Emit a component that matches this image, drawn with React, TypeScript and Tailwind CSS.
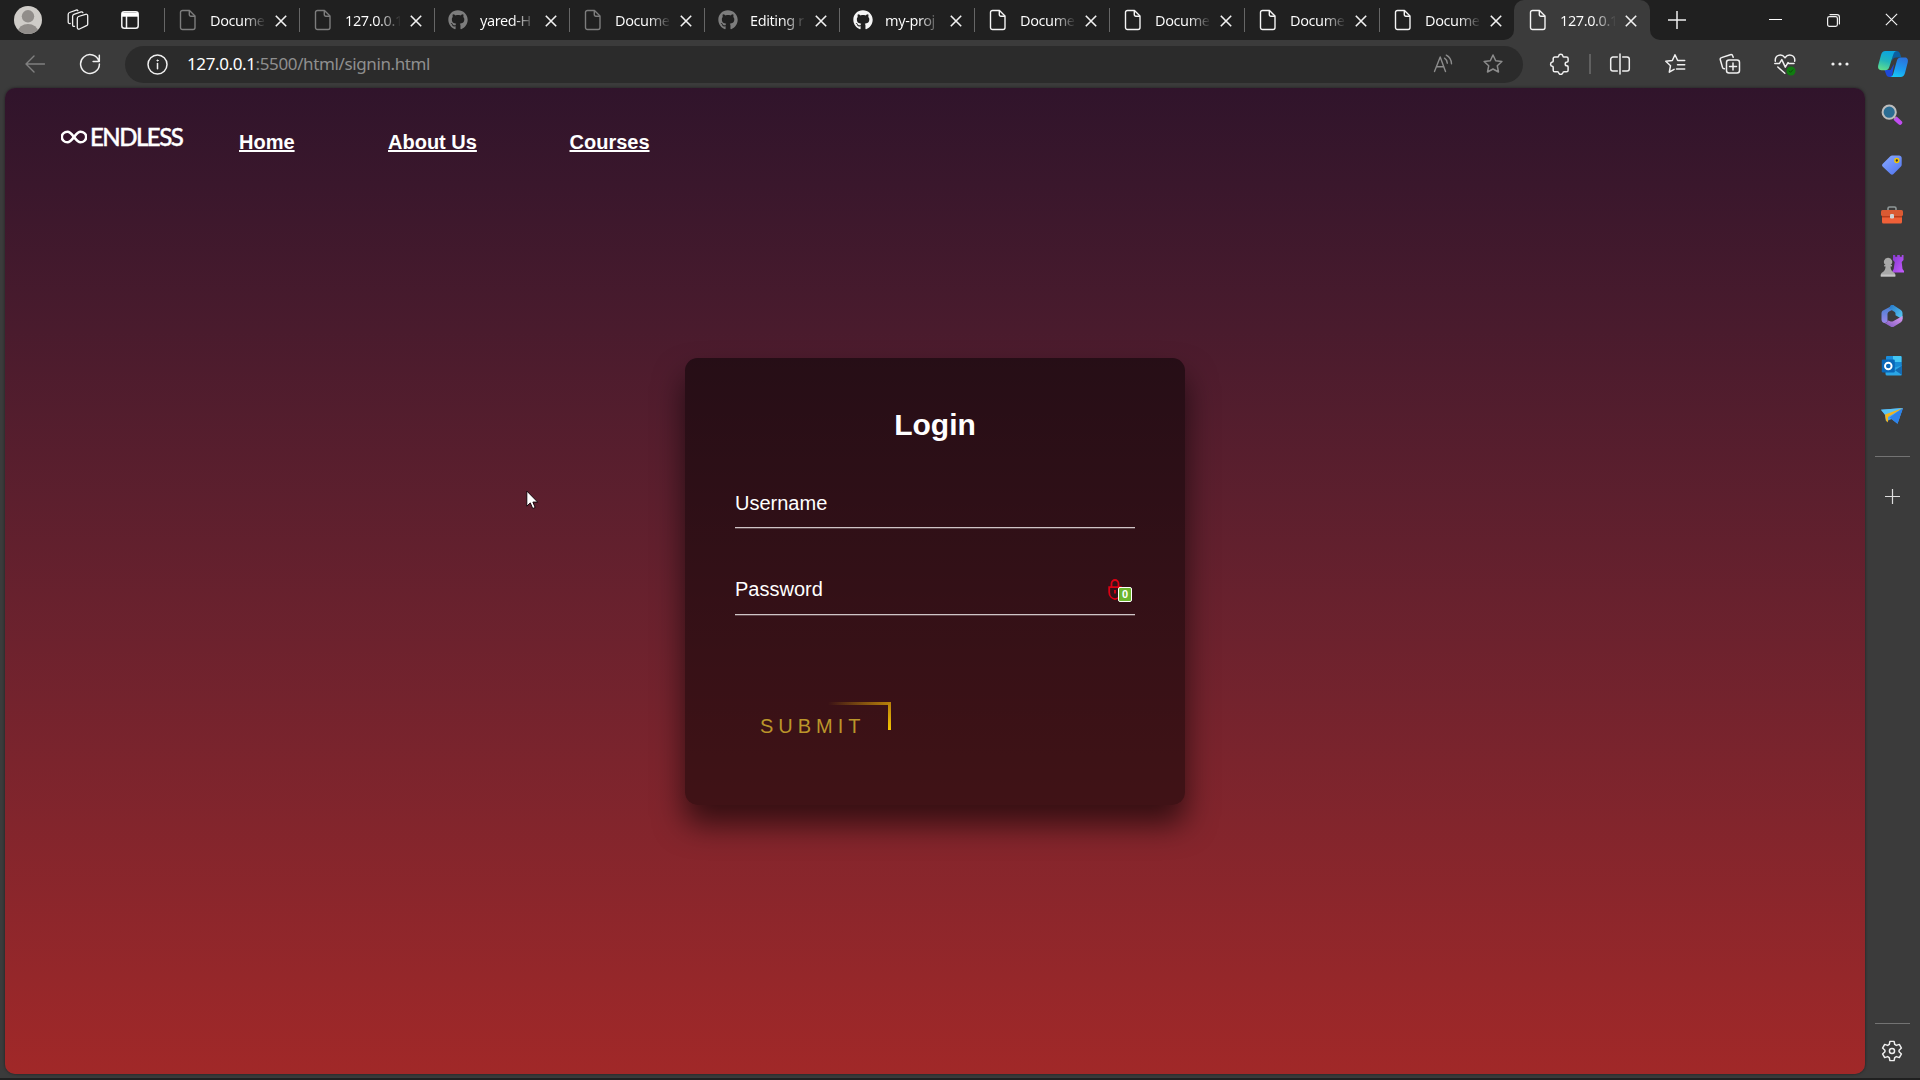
import React from "react";
import { FaGithub } from "react-icons/fa";

type IconProps = { className?: string };

const DocIcon = ({ className = "" }: IconProps) => (
  <svg className={className} width="18" height="22" viewBox="0 0 18 22" fill="none" stroke="currentColor" strokeWidth="1.4" strokeLinejoin="round">
    <path d="M3.5 1.5h7L16 7v11.5a2 2 0 0 1-2 2H3.500a2 2 0 0 1-2-2v-15a2 2 0 0 1 2-2z" />
    <path d="M10.300 1.500v4.200a1.500 1.500 0 0 0 1.500 1.500H16" />
  </svg>
);

const CloseIcon = ({ size = 12, w = 1.6 }: { size?: number; w?: number }) => (
  <svg width={size} height={size} viewBox="0 0 12 12" stroke="#f2f2f2" strokeWidth={w} fill="none">
    <path d="M.8.8l10.400 10.400M11.200.8L.8 11.200" />
  </svg>
);

type Tab = { icon: "doc" | "git"; title: string; bright?: boolean; active?: boolean };

const tabs: Tab[] = [
  { icon: "doc", title: "Docume" },
  { icon: "doc", title: "127.0.0.1" },
  { icon: "git", title: "yared-H" },
  { icon: "doc", title: "Docume" },
  { icon: "git", title: "Editing r" },
  { icon: "git", title: "my-proj", bright: true },
  { icon: "doc", title: "Docume", bright: true },
  { icon: "doc", title: "Docume", bright: true },
  { icon: "doc", title: "Docume", bright: true },
  { icon: "doc", title: "Docume", bright: true },
  { icon: "doc", title: "127.0.0.1", bright: true, active: true },
];

function TabItem({ tab }: { tab: Tab }) {
  return (
    <div className={"relative flex h-full shrink-0 items-center " + (tab.active ? "w-[136px] rounded-t-[10px] bg-[#3b3b3b]" : "w-[135px]")}>
      {tab.active ? (
        <>
          <div className="absolute bottom-0 -left-[10px] h-[10px] w-[10px] bg-[#3b3b3b]"><div className="h-full w-full rounded-br-[10px] bg-[#202020]" /></div>
          <div className="absolute bottom-0 -right-[10px] h-[10px] w-[10px] bg-[#3b3b3b]"><div className="h-full w-full rounded-bl-[10px] bg-[#202020]" /></div>
          <div className="w-px" />
        </>
      ) : (
        <div className="h-[24px] w-px bg-[#666666]" />
      )}
      <div className={"ml-[13px] flex w-[20px] justify-center " + (tab.bright ? "text-[#f4f4f4]" : "text-[#7d7d7d]")}>
        {tab.icon === "doc" ? <DocIcon /> : <FaGithub size={20} />}
      </div>
      <div className="ml-[12px] w-[56px] whitespace-nowrap bg-linear-to-r from-white from-60% to-transparent to-100% bg-clip-text pb-px text-[14.5px] leading-[22px] tracking-[-0.4px] text-transparent">
        {tab.title}
      </div>
      <div className="ml-[9px] mt-px flex w-[12px] justify-center"><CloseIcon /></div>
    </div>
  );
}

const Copilot = () => (
  <svg width="32" height="28" viewBox="0 0 32 28">
    <defs>
      <linearGradient id="cpA" x1="0.5" y1="0" x2="0.2" y2="1"><stop offset="0" stopColor="#0aa5e0" /><stop offset=".5" stopColor="#22b5bb" /><stop offset="1" stopColor="#62e08c" /></linearGradient>
      <linearGradient id="cpB" x1="0.6" y1="0" x2="0.3" y2="1"><stop offset="0" stopColor="#2b73dc" /><stop offset=".6" stopColor="#1b9df0" /><stop offset="1" stopColor="#17c8f5" /></linearGradient>
    </defs>
    <path d="M16 1h3.500c2 0 3 1 3.700 3l1 3.500h-5c-2.500 0-3.500 1-4.500 4z" fill="#0b5fa0" />
    <path d="M7.500 20h6l3.500-6-2 13h-2.500c-2 0-2.800-1-3.400-2.800z" fill="#1d49d8" />
    <path d="M8.500 1H20c-2 0-3 1.500-3.700 3.500l-4 12.500c-.8 2.500-2 3.200-4 3.200H4.500C1.500 20.200.6 18 1.300 15L4 5C4.800 2.200 6 1 8.500 1z" fill="url(#cpA)" />
    <path d="M23.500 27H12.800c2 0 2.800-1.500 3.500-3.500l3.500-12.500c.8-2.600 2-3.500 4.200-3.500h3.500c3 0 3.900 2 3.200 5L28 23c-.8 2.800-2 4-4.500 4z" fill="url(#cpB)" />
  </svg>
);

function Cell({ className, children }: { className: string; children: React.ReactNode }) {
  return <div className={"flex shrink-0 items-center justify-center " + className}>{children}</div>;
}

const line = { fill: "none", stroke: "#f0f0f0", strokeWidth: 1.5, strokeLinecap: "round" as const, strokeLinejoin: "round" as const };
const STAR = "M11 2l2.700 5.700 6.200.8-4.600 4.300 1.200 6.200L11 16l-5.500 3 1.200-6.200L2.100 8.500l6.200-.8z";

function TitleBar() {
  return (
    <div className="flex h-[40px] shrink-0 bg-[#202020]">
      <Cell className="w-[56px]">
        <svg width="28" height="28" viewBox="0 0 28 28">
          <defs><clipPath id="av"><circle cx="14" cy="14" r="14" /></clipPath></defs>
          <g clipPath="url(#av)"><rect width="28" height="28" fill="#cfccc8" /><circle cx="14" cy="10.300" r="6.200" fill="#918d8a" /><ellipse cx="14" cy="25.500" rx="10" ry="7.500" fill="#918d8a" /></g>
        </svg>
      </Cell>
      <Cell className="w-[43px]">
        <svg width="22" height="22" viewBox="0 0 22 22" {...line} strokeWidth={1.3}>
          <path d="M11.500 7.500l7-2.200a1.600 1.600 0 0 1 2.200 1.500v8.400c0 .8-.5 1.300-1.200 1.500l-7 3.300a1.500 1.500 0 0 1-2.200-1.400v-9c0-1 .4-1.800 1.200-2.100z" />
          <path d="M7.500 17.300c-1.200.4-1.900-.3-1.900-1.300V7.500c0-1 .4-1.800 1.300-2.100l7.200-2.500c.9-.3 1.500.1 1.800.8" />
          <path d="M3.200 14.500C2 14.700 1.200 14 1.200 13V5.500c0-1 .4-1.700 1.300-2L9.200 1.100c.8-.3 1.400 0 1.700.6" />
        </svg>
      </Cell>
      <Cell className="w-[61px]">
        <svg width="18" height="18" viewBox="0 0 18 18" fill="none" stroke="#f4f4f4" strokeWidth="1.500"><rect x=".8" y=".8" width="16.400" height="16.400" rx="2.500" /><path d="M1 1.500h16v4.200H1z" fill="#fff" stroke="none" /><path d="M5.500 5v12" /></svg>
      </Cell>
      <div className="ml-[4px] flex">{tabs.map((t, i) => <TabItem key={i} tab={t} />)}</div>
      <Cell className="w-[53px] pb-px"><svg width="18" height="18" viewBox="0 0 18 18" stroke="#eee" strokeWidth="1.500"><path d="M9 0v18M0 9h18" /></svg></Cell>
      <Cell className="ml-auto w-[57px] pb-px"><svg width="13" height="3" viewBox="0 0 13 3"><path d="M0 1h13v1H0z" fill="#fff" /></svg></Cell>
      <Cell className="w-[58px]"><svg width="13" height="13" viewBox="0 0 13 13" {...line} strokeWidth={1.2}><rect x=".6" y="2.600" width="9.800" height="9.800" rx="1.800" /><path d="M3 .6h7c1.400 0 2.400 1 2.400 2.400v7" /></svg></Cell>
      <Cell className="w-[58px] pb-px"><CloseIcon size={13} w={1.1} /></Cell>
    </div>
  );
}

function Toolbar() {
  return (
    <div className="flex h-[48px] shrink-0 items-center">
      <Cell className="w-[70px] pb-px"><svg width="20" height="18" viewBox="0 0 20 18" {...line} stroke="#808080" strokeWidth={1.4}><path d="M19.500 9H1M9 1L1 9l8 8" /></svg></Cell>
      <Cell className="w-[40px]"><svg width="22" height="22" viewBox="0 0 22 22" {...line}><path d="M20 8.300A9.400 9.400 0 1 0 20.400 11M20.300 2.200v6.200h-6.200" /></svg></Cell>
      <div className="ml-[15px] flex h-[37px] w-[1398px] items-center rounded-full bg-[#2b2b2b]">
        <Cell className="w-[62px] pl-[3px]"><svg width="21" height="21" viewBox="0 0 21 21" {...line}><circle cx="10.500" cy="10.500" r="9.500" /><path d="M10.500 9.500v5.200" /><circle cx="10.500" cy="6.500" r=".6" fill="#f0f0f0" strokeWidth="1" /></svg></Cell>
        <div className="pb-px text-[17px] leading-[24px] tracking-[-0.38px] whitespace-nowrap text-[#8f8f8f]"><span className="text-white">127.0.0.1</span>:5500/html/signin.html</div>
        <Cell className="ml-auto w-[50px]">
          <svg width="20" height="20" viewBox="0 0 20 20" {...line} stroke="#8c8c8c" strokeWidth={1.4}><path d="M1.500 17.500L7.200 3l5.300 14.500M3.300 12.800h7.600M11.500 4.200c1.600 1 2.500 2.500 2.800 5M13.300 1.200c3 1.600 5 4.300 5.200 8.500" /></svg>
        </Cell>
        <Cell className="mr-[5px] w-[50px]"><svg width="22" height="22" viewBox="0 0 22 22" {...line} stroke="#8c8c8c"><path d={STAR} /></svg></Cell>
      </div>
      <Cell className="ml-[11px] w-[52px]">
        <svg width="22" height="22" viewBox="0 0 22 22" {...line}><path d="M5.800 4h2.700c.7 0 1-.3 1.100-.9a2.200 2.200 0 0 1 4.300 0c.1.600.4.9 1.100.9h2.500c1 0 1.600.6 1.600 1.600v2.300c0 .7-.3 1-1 1.100a1.900 1.900 0 0 0 0 3.800c.7.1 1 .4 1 1.100v3.300c0 1-.6 1.600-1.600 1.600H15c-.7 0-1 .3-1.100.9a2.200 2.200 0 0 1-4.300 0c-.1-.6-.4-.9-1.100-.9H5.800c-1 0-1.600-.6-1.600-1.600v-2.800c0-.7-.3-1-.9-1.100a2.200 2.200 0 0 1 0-4.300c.6-.1.9-.4.9-1.100V5.600C4.200 4.600 4.800 4 5.800 4z" /></svg>
      </Cell>
      <div className="ml-[3px] h-[20px] w-[2px] bg-[#606060]" />
      <Cell className="w-[57px]"><svg width="22" height="22" viewBox="0 0 22 22" {...line}><path d="M11 1v20M8.300 4H4a2.300 2.300 0 0 0-2.300 2.300v9.400A2.300 2.300 0 0 0 4 18h4.300M13.700 4H18a2.300 2.300 0 0 1 2.300 2.300v9.400A2.300 2.300 0 0 1 18 18h-4.300" /></svg></Cell>
      <Cell className="w-[54px]"><svg width="22" height="22" viewBox="0 0 22 22" {...line}><path d="M16.300 7.500h-2.600L11 1.800 8.300 7.500l-6.500.8 4.700 4.400-1.200 6.500 4.800-2.800M14.500 7.500h6.200M13.500 11.800h7.200M12.500 16h8.200" /></svg></Cell>
      <Cell className="w-[55px]"><svg width="22" height="22" viewBox="0 0 22 22" {...line}><rect x="7.500" y="7" width="13" height="13" rx="2.500" /><path d="M14 10v7M10.500 13.500h7M5.500 15.700c-1 .1-1.700-.4-2-1.300L1.300 6.800c-.3-1 .2-1.900 1.200-2.200l8.800-2.900c1.200-.3 2.200.2 2.500 1.300l.4 1.200" /></svg></Cell>
      <Cell className="w-[55px]"><svg width="24" height="24" viewBox="0 0 24 24" {...line}><path d="M2.300 9.200C1.700 3 8.500 1 12 5.800 15.500 1 22.500 3 21.700 9.200M1.800 11.600h4.500l2.500-4 3.500 7.500 2.700-4.500 1 1h5M4.800 15l7 6.300" /><circle cx="18" cy="19" r="4.500" fill="#107c10" stroke="none" /><path d="M16.200 19l1.300 1.300 2.300-2.500" stroke="#0a4a0a" strokeWidth="1" /></svg></Cell>
      <Cell className="w-[55px]"><svg width="18" height="4" viewBox="0 0 18 4" fill="#f0f0f0"><circle cx="2" cy="2" r="1.600" /><circle cx="9" cy="2" r="1.600" /><circle cx="16" cy="2" r="1.600" /></svg></Cell>
      <Cell className="w-[51px]"><Copilot /></Cell>
    </div>
  );
}

const sideIcons: React.ReactNode[] = [
  <svg key="search" width="22" height="22" viewBox="0 0 22 22"><path d="M15 15l4 3.600" stroke="#c04cf0" strokeWidth="4.500" strokeLinecap="round" /><path d="M12 12l2.500 2.300" stroke="#999" strokeWidth="2" /><circle cx="8.200" cy="8.200" r="6.600" fill="#2b6d93" stroke="#bdbdbd" strokeWidth="2" /></svg>,
  <svg key="tag" width="22" height="22" viewBox="0 0 22 22"><defs><linearGradient id="tg" x1="0" y1="0" x2=".8" y2="1"><stop stopColor="#8aabff" /><stop offset="1" stopColor="#5377f0" /></linearGradient></defs><path d="M11.500 1.500h6.500c1.500 0 2.700 1 2.700 2.500v6.500c0 1-.3 1.500-1 2.200l-7.200 7.300c-1 1-2 1-3 0L1.800 12.800c-1-1-1-2 0-3l7.500-7.500c.7-.7 1.200-.8 2.200-.8z" fill="url(#tg)" /><circle cx="15.800" cy="6.500" r="1.900" fill="#333" stroke="#f2c500" strokeWidth="1.500" /></svg>,
  <svg key="box" width="24" height="20" viewBox="0 0 24 20"><path d="M8 5V3.500A1.500 1.500 0 0 1 9.500 2h5A1.500 1.500 0 0 1 16 3.500V5" fill="none" stroke="#909898" strokeWidth="1.600" /><path d="M2 9h20v8a1.500 1.500 0 0 1-1.500 1.500h-17A1.500 1.500 0 0 1 2 17z" fill="#ef6038" /><path d="M2 10h20v2.500H2z" fill="#b93c1b" /><rect x="1" y="5" width="22" height="6" rx="1.500" fill="#da5a33" /><rect x="10" y="9" width="4" height="4.500" rx="1.200" fill="#cdd4d8" /></svg>,
  <svg key="chess" width="24" height="24" viewBox="0 0 24 24"><defs><linearGradient id="rk" x1="0" y1="0" x2="1" y2="1"><stop stopColor="#8538ce" /><stop offset="1" stopColor="#c55cff" /></linearGradient></defs><path d="M13 1h2.200v1.800h2V1h2.600v1.800h2V1H23.500v5l-1.800 2 .8 7 1.500 2v1.500H12.500V17l1.200-2 1-7L13 6z" fill="url(#rk)" /><path d="M8 3.800a4 4 0 0 1 2.600 7.200H12v1.500h-1.500c.2 3 1 4.500 3 5.800 1.200.8 1.800 1.700 1.800 3v1.200H.8v-1.200c0-1.300.6-2.200 1.800-3 2-1.300 2.700-2.800 3-5.800H4.200V11h1.300A4 4 0 0 1 8 3.800z" fill="#a8a8a8" /><path d="M.8 20.500h14.500v2H.8z" fill="#c4c4c4" /></svg>,
  <svg key="m365" width="22" height="22" viewBox="0 0 22 22"><defs><linearGradient id="ma" x1="0" y1="0" x2="1" y2="1"><stop stopColor="#2575c8" /><stop offset="1" stopColor="#5bd0f5" /></linearGradient><linearGradient id="mb" x1="0" y1="1" x2="1" y2="0"><stop stopColor="#7d58c2" /><stop offset="1" stopColor="#dc9af0" /></linearGradient><linearGradient id="mc" x1="0" y1="0" x2="0" y2="1"><stop stopColor="#3f7fd0" /><stop offset="1" stopColor="#9a86ea" /></linearGradient></defs><path d="M12.500 0L2.500 5.300C1.200 6 .5 7 .5 8.500v6c0 1.500.8 2.600 2 3.200 2.400 1 4-.4 4-2.700V9.500c0-1.300.5-2.200 1.600-2.900L13 4z" fill="url(#mc)" /><path d="M9.500.5c1-.6 2.500-.6 3.500 0l6.500 4.300c1.300.8 2 2 2 3.400v6l-7-4V8.500c0-.8-.4-1.400-1.100-1.800L8 3.500z" fill="url(#ma)" /><path d="M21.500 11v3.200c0 1.400-.7 2.500-1.900 3.200l-6.500 4c-1.100.7-2.500.7-3.600 0L3 17.700c2.500.5 3.500-.7 3.500-2.500l3.300 1.200c.8.300 1.600.2 2.300-.2z" fill="url(#mb)" /></svg>,
  <svg key="outlook" width="22" height="22" viewBox="0 0 22 22"><rect x="5" y="1" width="15.500" height="18" rx="1" fill="#1a8ddb" /><path d="M12 1h7.500a1 1 0 0 1 1 1v5H12z" fill="#43c6f3" /><path d="M12 7h8.500v6H12z" fill="#1689d5" /><path d="M4.500 15L21 10.500V19a1.500 1.500 0 0 1-1.500 1.500H6A1.500 1.500 0 0 1 4.500 19z" fill="#2aa6e6" /><path d="M21 10.500V20l-7-4.700z" fill="#146bb3" /><rect x=".8" y="4.500" width="13" height="13" rx="1.200" fill="#0967b8" /><circle cx="7.300" cy="11" r="3.300" fill="none" stroke="#fff" strokeWidth="1.900" /></svg>,
  <svg key="plane" width="24" height="18" viewBox="0 0 24 18"><path d="M1 2.800L23 1 17.500 16.800 11.500 12 6 14.500 5 8z" fill="#4aa6f2" /><path d="M1 2.800L23 1 5.500 8z" fill="#58c2f5" /><path d="M5 7.500L23 1 8 10v5.500l-2-2z" fill="#f2b51e" /><path d="M9.500 10.500L23 1l-5.500 15.800z" fill="#2c82ea" /></svg>,
];

function Sidebar() {
  return (
    <div className="flex w-[54px] shrink-0 flex-col items-center pt-[2px]">
      {sideIcons.map((icon, i) => <Cell key={i} className="h-[50.2px] w-full">{icon}</Cell>)}
      <div className="mt-[15px] h-px w-[35px] bg-[#737373]" />
      <Cell className="mt-[29px] h-[20px]"><svg width="15" height="15" viewBox="0 0 15 15" stroke="#ddd" strokeWidth="1.200"><path d="M7.500 0v15M0 7.500h15" /></svg></Cell>
      <div className="mt-auto h-px w-[35px] bg-[#737373]" />
      <Cell className="mt-[16px] mb-[16px] h-[22px]">
        <svg width="22" height="22" viewBox="0 0 24 24" {...line} strokeWidth={1.6}><circle cx="12" cy="12" r="2.800" /><path d="M9.700 1.500h4.600l.7 3.400 1.700 1 3.300-1.100 2.300 4-2.600 2.300v1.800l2.600 2.300-2.300 4-3.300-1.100-1.700 1-.7 3.400H9.700L9 19.100l-1.700-1L4 19.200l-2.300-4 2.600-2.300v-1.800L1.700 8.800l2.300-4 3.300 1.100 1.700-1z" /></svg>
      </Cell>
    </div>
  );
}

const FIELD = "flex h-[40px] items-start border-b border-[#cfc4c6] text-[20px] leading-[30px] shadow-[0_1px_0_rgba(255,255,255,0.220)]";

function LoginCard() {
  return (
    <div className="mt-[212px] ml-[680px] flex h-[447px] w-[500px] flex-col rounded-[12.500px] bg-black/50 px-[50px] pt-[49px] shadow-[0_19px_31px_rgba(0,0,0,0.600)]">
      <h2 className="text-center text-[30px] leading-[36px] font-bold">Login</h2>
      <div className={"mt-[45px] " + FIELD}>Username</div>
      <div className={"mt-[47px] " + FIELD}>
        <span className="-mt-px">Password</span>
        <div className="relative mt-[3px] mr-[3px] ml-auto h-[26px] w-[24px]">
          <svg width="14" height="24" viewBox="0 0 14 24" fill="none" stroke="#dc0014" strokeWidth="1.800"><path d="M3.500 9V5.500a3.500 3.500 0 0 1 7 0V9M1.200 9.200h11.600v5c0 4-3 6.500-5.800 7-2.800-.5-5.800-3-5.800-7z" /><path d="M7 12v3.500" /></svg>
          <div className="absolute top-[9px] left-[10px] flex h-[15px] w-[14px] items-center justify-center rounded-[2px] border border-white bg-[#6cb52d] text-[11px] leading-none font-bold">0</div>
        </div>
      </div>
      <div className="relative mt-[87px] flex h-[56px] w-[156px] items-center pl-[25px] text-[20px] tracking-[5px] text-[#bb962a]">
        <div className="absolute top-0 right-0 h-[3px] w-[63px] bg-linear-to-r from-transparent to-[#b98209]" />
        <div className="absolute top-0 right-0 h-[28px] w-[3px] bg-linear-to-b from-[#b47d0b] to-[#f6c500]" />
        <span className="-mt-[9px]">SUBMIT</span>
      </div>
    </div>
  );
}

function Page() {
  return (
    <div className="ml-[5px] h-[986px] w-[1860px] shrink-0 overflow-hidden rounded-[10px] bg-linear-to-b from-[#30142b] to-[#a12828] font-['Liberation_Sans',Arial,sans-serif] text-white shadow-[0_0_3px_rgba(0,0,0,0.500)]">
      <nav className="flex h-[58px] items-end pl-[56px] text-[20px] leading-[24px] font-bold">
        <div className="mr-[55px] mb-[-9px] flex h-[36px] w-[123px] items-center">
          <svg className="shrink-0" width="26" height="14" viewBox="0 0 27 16" preserveAspectRatio="none" fill="none" stroke="#fff" strokeWidth="2.700"><path d="M13.500 8C11 4.500 9.500 2 6.800 2a5.600 5.600 0 0 0 0 12c2.700 0 4.200-2.500 6.700-6s4-6 6.700-6a5.600 5.600 0 0 1 0 12c-2.700 0-4.200-2.500-6.700-6z" /></svg>
          <span className="ml-[3px] font-['Lato',sans-serif] text-[24px] leading-[24px] font-medium tracking-[-1.500px] [-webkit-text-stroke:0.4px_white]">ENDLESS</span>
        </div>
        <a className="mb-[-8px] w-[149px] underline">Home</a>
        <a className="mb-[-8px] w-[181.500px] underline">About Us</a>
        <a className="mb-[-8px] underline">Courses</a>
      </nav>
      <LoginCard />
    </div>
  );
}

export default function App() {
  return (
    <div className="relative flex h-[1080px] w-[1920px] flex-col overflow-hidden bg-[#3b3b3b] font-['Noto_Sans','Open_Sans',sans-serif] text-white">
      <TitleBar />
      <Toolbar />
      <div className="flex h-[990px] shrink-0"><Page /><Sidebar /></div>
      <div className="h-[2px] bg-[#202020]" />
      <svg className="absolute top-[490px] left-[526px]" width="14" height="20" viewBox="0 0 14 20"><path d="M.8 1v15.200l3.500-3.300 2.400 5.600 2.500-1-2.300-5.400h4.800z" fill="#fff" stroke="#14040a" strokeWidth="1" /></svg>
    </div>
  );
}
